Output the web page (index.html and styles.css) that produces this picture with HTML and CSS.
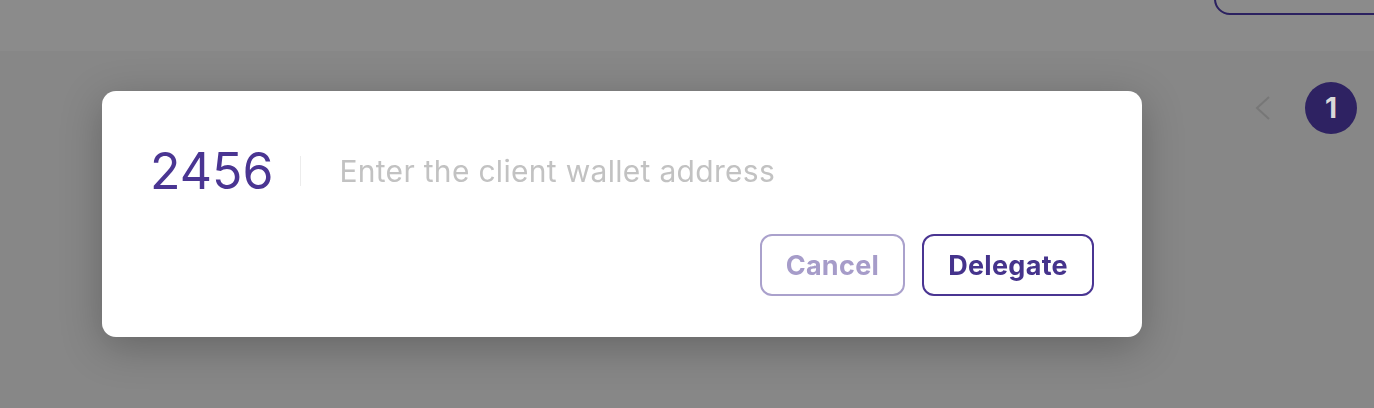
FILE: index.html
```html
<!DOCTYPE html>
<html lang="en">

<head>
    <title>Delegate</title>
    <link rel="stylesheet" href="styles.css">
</head>

<body>
    <div class="top-bar">
        <button class="top-button"></button>
    </div>

    <div class="content">
        <div class="pager">
            <span class="pager-prev">
                <svg width="18" height="26" viewBox="0 0 18 26">
                    <path d="M15 2 L3 13 L15 24" fill="none" stroke="#777777" stroke-width="2" />
                </svg>
            </span>
            <span class="pager-page">1</span>
        </div>
    </div>

    <div class="overlay">
        <div class="modal">
            <div class="modal-row">
                <span class="modal-number">2456</span>
                <span class="modal-divider"></span>
                <input class="modal-input" type="text" placeholder="Enter the client wallet address">
            </div>

            <div class="modal-actions">
                <button class="btn btn-cancel">Cancel</button>
                <button class="btn btn-delegate">Delegate</button>
            </div>
        </div>
    </div>
</body>

</html>
```

FILE: styles.css
```css
/* Page behind the dialog, already dimmed */
body {
    margin: 0;
    height: 100vh;
    background-color: #878787;
    font-family: Inter, "Noto Sans", Arial, sans-serif;
    overflow: hidden;
}

.top-bar {
    height: 51px;
    background-color: #8b8b8b;
    display: flex;
    justify-content: flex-end;
    overflow: hidden;
}

.top-button {
    width: 200px;
    height: 50px;
    margin-top: -35px;
    margin-right: -40px;
    background-color: transparent;
    border: 2px solid #2b2160;
    border-radius: 16px;
}

.content {
    display: flex;
    justify-content: flex-end;
    padding: 31px 17px 0 0;
}

.pager {
    display: flex;
    align-items: center;
    gap: 33px;
}

.pager-prev {
    display: flex;
}

.pager-page {
    width: 52px;
    height: 52px;
    border-radius: 50%;
    background-color: #2e2262;
    color: #d9d9d9;
    font-size: 28px;
    font-weight: 700;
    display: flex;
    justify-content: center;
    align-items: center;
}

/* Dialog layer */
.overlay {
    position: fixed;
    top: 0;
    left: 0;
    right: 0;
    bottom: 0;
    padding: 91px 0 0 102px;
}

.modal {
    width: 1040px;
    box-sizing: border-box;
    background-color: #ffffff;
    border-radius: 14px;
    padding: 50px 48px 41px 48px;
    box-shadow: 0 10px 40px rgba(0, 0, 0, 0.25);
}

.modal-row {
    display: flex;
    align-items: center;
    height: 60px;
}

.modal-number {
    font-size: 50px;
    color: #4a3592;
}

.modal-divider {
    width: 1px;
    height: 30px;
    background-color: #ececec;
    margin: 0 38px 0 27px;
}

.modal-input {
    flex: 1;
    border: none;
    outline: none;
    padding: 0;
    font-family: Inter, "Noto Sans", Arial, sans-serif;
    font-size: 30px;
    letter-spacing: 0.3px;
    color: #333333;
}

.modal-input::placeholder {
    color: #c2c2c2;
}

.modal-actions {
    display: flex;
    justify-content: flex-end;
    gap: 17px;
    margin-top: 33px;
}

.btn {
    height: 62px;
    padding: 0 24px;
    background-color: transparent;
    border-radius: 12px;
    font-family: Inter, "Noto Sans", Arial, sans-serif;
    font-size: 27px;
    font-weight: 700;
    letter-spacing: 0.3px;
    cursor: pointer;
}

.btn-cancel {
    border: 2px solid #aaa1cc;
    color: #a69cc9;
}

.btn-delegate {
    border: 2px solid #4a3592;
    color: #45338c;
}
```
